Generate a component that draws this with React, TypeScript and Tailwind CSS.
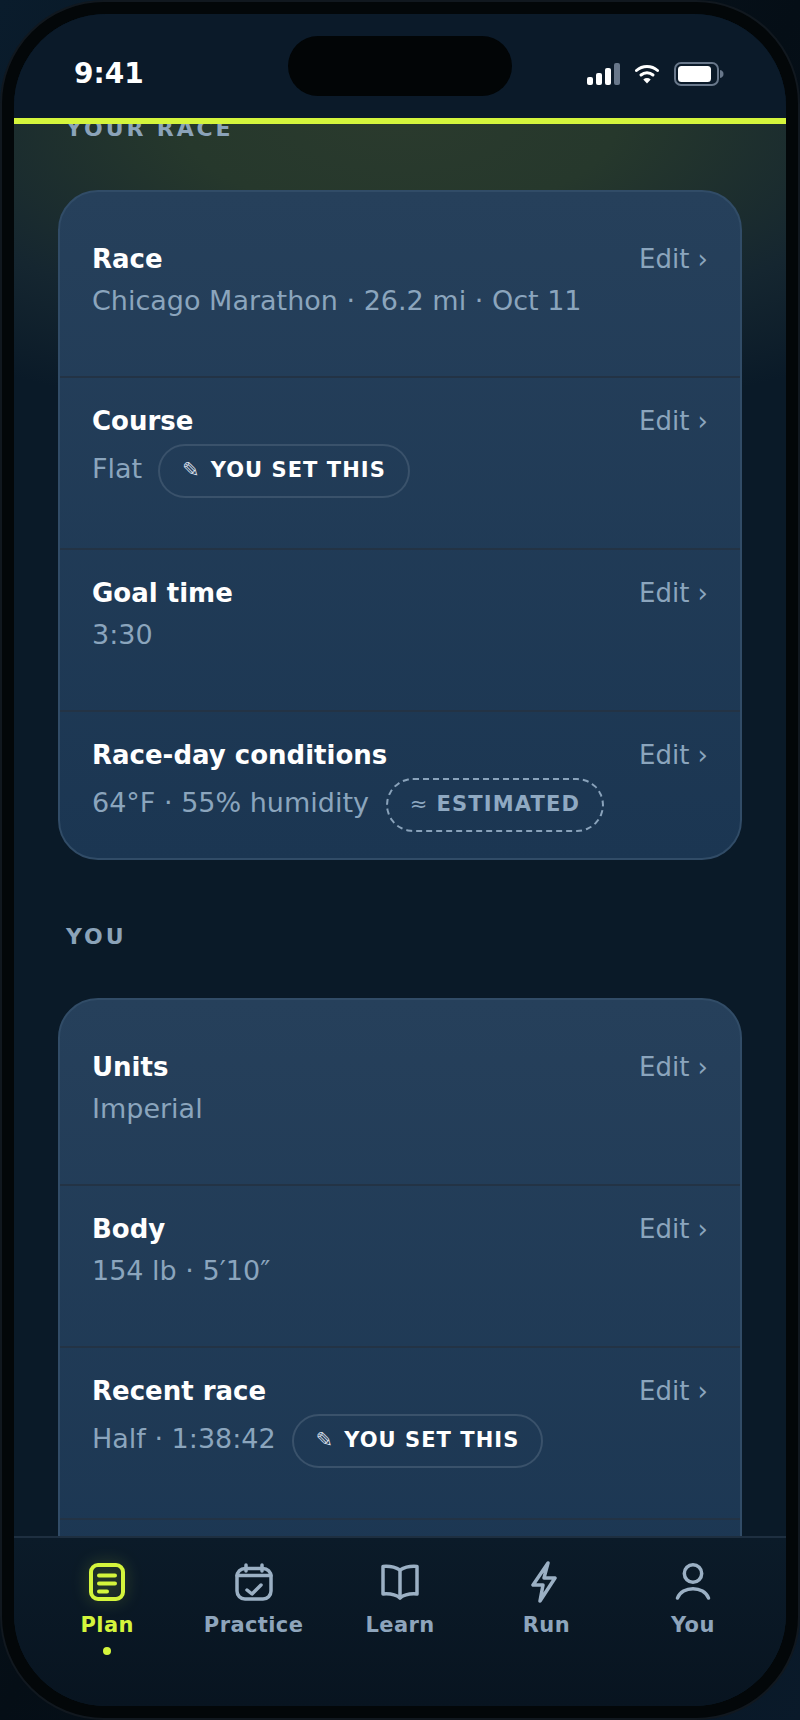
import React from "react";

const font = { fontFamily: '"DejaVu Sans", sans-serif' };

function Pill({ kind }: { kind: "set" | "est" }) {
  if (kind === "set") {
    return (
      <span className="inline-flex h-[54px] w-[251.5px] items-center justify-center gap-[10px] rounded-full border-2 border-[#3a526b] pb-[3px] text-[21px] font-bold tracking-[1.05px] text-white">
        <span className="font-normal text-[#d5dee8]">✎</span>
        <span>YOU SET THIS</span>
      </span>
    );
  }
  return (
    <span className="inline-flex h-[54px] w-[218px] items-center justify-center gap-[8px] rounded-full border-2 border-dashed border-[#8aa3bb] pb-[3px] text-[21px] font-bold tracking-[1.15px] text-[#8fa9c2]">
      <span className="font-normal">≈</span>
      <span>ESTIMATED</span>
    </span>
  );
}

function Row({
  label,
  value,
  pill,
  className,
}: {
  label: string;
  value: string;
  pill?: "set" | "est";
  className: string;
}) {
  return (
    <div className={`flex items-start justify-between border-b-2 border-[#233345] pl-[32px] pr-[32px] ${className}`}>
      <div className="flex flex-col">
        <div className="text-[26px] leading-[36px] font-bold text-white">{label}</div>
        <div className={`flex items-center gap-[16px] text-[27px] text-[#8ba5bd] ${pill ? "mt-[5px] leading-[54px]" : "mt-[6px] leading-[36px]"}`}>
          <span className={pill ? "-mt-[4px]" : ""}>{value}</span>
          {pill && <Pill kind={pill} />}
        </div>
      </div>
      <div className="text-[26px] leading-[36px] text-[#8ba5bd]">Edit ›</div>
    </div>
  );
}

function Card({ children, className }: { children: React.ReactNode; className: string }) {
  return (
    <div className={`mx-[44px] shrink-0 overflow-hidden rounded-[40px] border-2 border-[#314c67] bg-gradient-to-b from-[#26405b] to-[#1b3652] ${className}`}>
      {children}
    </div>
  );
}

function Heading({ children, className }: { children: React.ReactNode; className: string }) {
  return <div className={`ml-[52px] text-[22px] leading-[28px] font-bold tracking-[2.9px] text-[#8ba3b9] ${className}`}>{children}</div>;
}

function NavItem({ label, active, children }: { label: string; active?: boolean; children: React.ReactNode }) {
  return (
    <div className="relative flex flex-1 flex-col items-center">
      <div className="flex h-[48px] items-center justify-center">{children}</div>
      <div className={`mt-[4px] text-[21px] leading-[30px] font-bold tracking-[0.4px] ${active ? "text-[#d4f53c]" : "text-[#8ea5bc]"}`}>{label}</div>
      {active && <div className="mt-[7px] h-[8px] w-[8px] rounded-full bg-[#d4f53c]" />}
    </div>
  );
}

export default function App() {
  return (
    <div style={font} className="h-[1720px] w-[800px] overflow-hidden bg-gradient-to-br from-[#0a1c2c] via-[#050e16] to-[#0a1a2a]">
      <div className="h-full w-full rounded-[104px] border-2 border-[#11181f] bg-[#030709] p-[12px]">
        <div className="relative flex h-full w-full flex-col overflow-hidden rounded-[92px] bg-[#0a1a28]">
          {/* status bar */}
          <div className="flex h-[104px] shrink-0 items-start justify-between bg-[#0b1a29] pl-[60px] pr-[62px] pt-[42px]">
            <span className="text-[28px] leading-[36px] font-bold text-white">9:41</span>
            <div className="mt-[6px] flex items-center gap-[15px]">
              <svg width="33" height="22" viewBox="0 0 33 22">
                <rect x="0" y="14" width="6" height="8" rx="2" fill="#fff" />
                <rect x="9" y="10" width="6" height="12" rx="2" fill="#fff" />
                <rect x="18" y="5" width="6" height="17" rx="2" fill="#fff" />
                <rect x="27" y="0" width="6" height="22" rx="2" fill="#68778a" />
              </svg>
              <svg width="24" height="20" viewBox="0 0 24 20" fill="none">
                <path d="M1.5 6.5C7.5 1.2 16.5 1.2 22.5 6.5" stroke="#fff" strokeWidth="3" strokeLinecap="round" />
                <path d="M6 11C9.5 8 14.5 8 18 11" stroke="#fff" strokeWidth="3" strokeLinecap="round" />
                <path d="M12 19.5L8.3 15.4C10.5 13.6 13.5 13.6 15.7 15.4Z" fill="#fff" />
              </svg>
              <svg width="50" height="24" viewBox="0 0 50 24" fill="none">
                <rect x="1" y="1" width="43" height="22" rx="6" stroke="#68778a" strokeWidth="2" />
                <rect x="4" y="4" width="33" height="16" rx="3.5" fill="#fff" />
                <path d="M46 8C48.5 8.5 49.5 10 49.5 12C49.5 14 48.5 15.5 46 16Z" fill="#68778a" />
              </svg>
            </div>
          </div>
          <div className="absolute left-1/2 top-[22px] h-[60px] w-[224px] -translate-x-1/2 rounded-full bg-[#020506]" />
          <div className="h-[6px] shrink-0 bg-[#d4f53c]" />

          {/* scroll area */}
          <div className="flex min-h-0 flex-1 flex-col overflow-hidden bg-[radial-gradient(ellipse_720px_300px_at_50%_0%,#2a3a2d_0%,#26382c_30%,#152630_70%,#0a1a28_100%)]">
            <Heading className="-mt-[9px]">YOUR RACE</Heading>
            <Card className="mt-[47px]">
              <Row label="Race" value="Chicago Marathon · 26.2 mi · Oct 11" className="h-[186px] pt-[49px]" />
              <Row label="Course" value="Flat" pill="set" className="h-[172px] pt-[25px]" />
              <Row label="Goal time" value="3:30" className="h-[162px] pt-[25px]" />
              <div className="flex items-start justify-between pl-[32px] pr-[32px] pt-[25px] pb-[26px]">
                <div className="flex flex-col">
                  <div className="text-[26px] leading-[36px] font-bold text-white">Race-day conditions</div>
                  <div className="mt-[5px] flex items-center gap-[17px] text-[27px] leading-[54px] text-[#8ba5bd]">
                    <span className="-mt-[4px]">64°F · 55% humidity</span>
                    <Pill kind="est" />
                  </div>
                </div>
                <div className="text-[26px] leading-[36px] text-[#8ba5bd]">Edit ›</div>
              </div>
            </Card>
            <Heading className="mt-[63px]">YOU</Heading>
            <Card className="mt-[47px]">
              <Row label="Units" value="Imperial" className="h-[186px] pt-[49px]" />
              <Row label="Body" value="154 lb · 5′10″" className="h-[162px] pt-[25px]" />
              <Row label="Recent race" value="Half · 1:38:42" pill="set" className="h-[172px] pt-[25px]" />
              <div className="h-[100px]" />
            </Card>
          </div>

          {/* nav */}
          <div className="flex h-[170px] shrink-0 border-t-2 border-[#1e2f40] bg-gradient-to-b from-[#0b1b29] to-[#081420] px-[20px] pt-[20px]">
            <NavItem label="Plan" active>
              <svg width="36" height="38" viewBox="0 0 36 38" fill="none" stroke="#d4f53c" strokeWidth="4" strokeLinecap="round" style={{ filter: "drop-shadow(0 0 8px rgba(212,245,60,0.3))" }}>
                <rect x="2" y="2" width="32" height="34" rx="7" />
                <path d="M10 12.5H26M10 20.5H26M10 28.5H18" />
              </svg>
            </NavItem>
            <NavItem label="Practice">
              <svg width="38" height="38" viewBox="0 0 38 38" fill="none" stroke="#9bb0c4" strokeWidth="3.5" strokeLinecap="round" strokeLinejoin="round">
                <rect x="2" y="5.5" width="34" height="30.5" rx="8" />
                <path d="M11 2V8M27 2V8M2 12.5H36M12 27L17 31L26 22" />
              </svg>
            </NavItem>
            <NavItem label="Learn">
              <svg width="38" height="36" viewBox="0 0 38 36" fill="none" stroke="#9bb0c4" strokeWidth="3.5" strokeLinecap="round" strokeLinejoin="round">
                <path d="M19 6C14 3 8 2 2 2.5V30C8 29.5 14 30 19 34C24 30 30 29.5 36 30V2.5C30 2 24 3 19 6Z" />
                <path d="M19 6V34" />
              </svg>
            </NavItem>
            <NavItem label="Run">
              <svg width="30" height="42" viewBox="0 0 30 42" fill="none" stroke="#9bb0c4" strokeWidth="3.5" strokeLinecap="round" strokeLinejoin="round">
                <path d="M17 2L2 24H12L9 40L24 17H13L17 2Z" />
              </svg>
            </NavItem>
            <NavItem label="You">
              <svg width="36" height="38" viewBox="0 0 36 38" fill="none" stroke="#9bb0c4" strokeWidth="3.5" strokeLinecap="round">
                <circle cx="18" cy="10.5" r="8.7" />
                <path d="M2.5 35C7 22.5 29 22.5 33.5 35" />
              </svg>
            </NavItem>
          </div>
        </div>
      </div>
    </div>
  );
}
